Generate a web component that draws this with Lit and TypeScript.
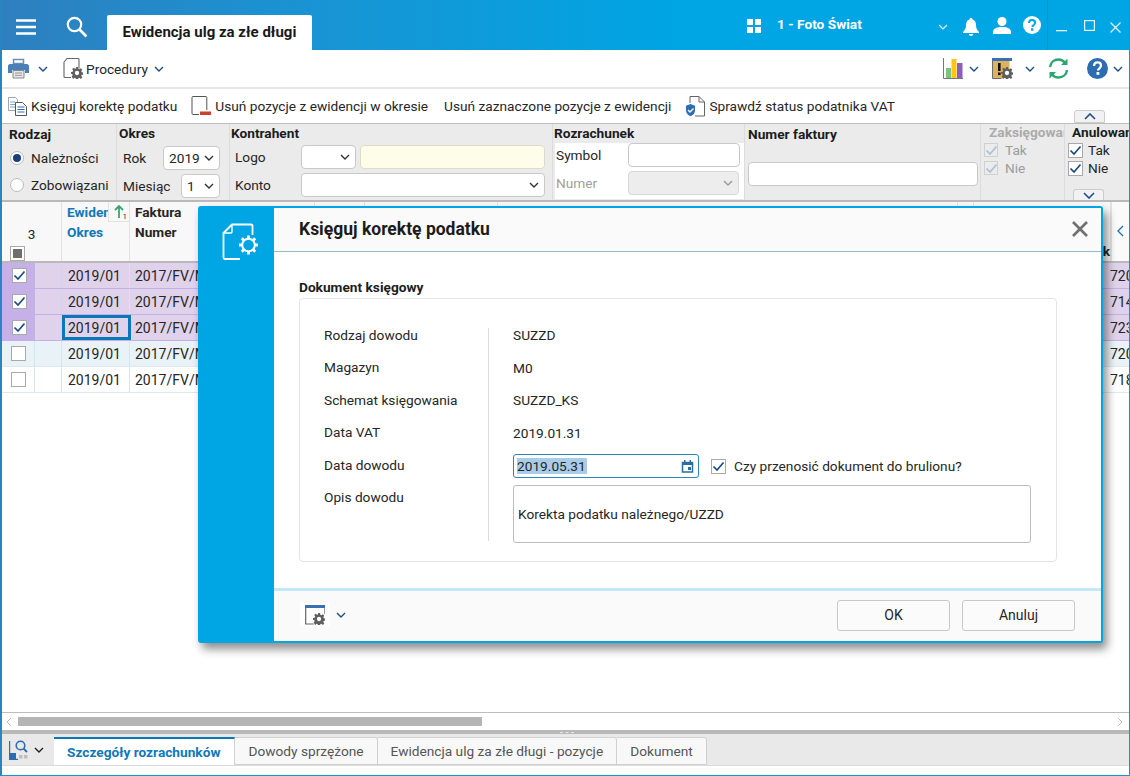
import { LitElement, html, css } from "lit";
import { customElement } from "lit/decorators.js";

const chev = (c = "#1f4e86") => html`<svg class="chev" width="10" height="6" viewBox="0 0 10 6"><path d="M1 1l4 4 4-4" fill="none" stroke=${c} stroke-width="1.4"/></svg>`;

const gear = (cx: number, cy: number, r: number, c = "#5f5f5f") => html`<svg x=${cx - r} y=${cy - r} width=${r * 2} height=${r * 2} viewBox="0 0 20 20"><path d="M8.3 0h3.4l.5 2.9 1.9.8 2.4-1.7 2.4 2.4-1.7 2.4.8 1.9 2.9.5v3.4l-2.9.5-.8 1.9 1.7 2.4-2.4 2.4-2.4-1.7-1.9.8-.5 2.9H8.3l-.5-2.9-1.9-.8-2.4 1.7L1.100 16l1.7-2.400-.8-1.900L0 11.200V8.300l2.900-.5.8-1.900L2 3.500l2.400-2.400L6.800 2.800l1.900-.8z" fill-rule="evenodd" fill=${c}/><circle cx="10" cy="10" r="3.600" fill="#fff"/></svg>`;

@customElement("app-root")
export class AppRoot extends LitElement {
  static styles = css`
    :host { display: block; width: 1130px; height: 776px; font-family: Roboto, "Liberation Sans", sans-serif; font-size: 13.7px; color: #262626; }
    * { box-sizing: border-box; }
    svg { display: block; flex: none; }
    .win { position: relative; width: 1130px; height: 776px; display: flex; flex-direction: column; overflow: hidden; background: #fff; border-left: 2px solid #2a84c2; border-right: 1px solid #0a9ad6; border-bottom: 1px solid #0a9ad6; }
    .title { height: 50px; margin-left: -2px; margin-right: -1px; display: flex; align-items: flex-start; background: linear-gradient(90deg, #2e7fbe 0%, #1b92d2 25%, #00a5e3 60%); color: #fff; flex: none; }
    .ham { margin: 19px 0 0 16px; width: 20px; }
    .srch { margin: 16px 0 0 30px; }
    .tab0 { margin: 15px 0 0 19px; width: 205px; height: 35px; background: #fff; color: #1a1a1a; font-weight: 700; font-size: 15px; line-height: 34px; text-align: center; border-radius: 2px 2px 0 0; }
    .firm { position: absolute; left: 775px; top: 16px; font-weight: 700; line-height: 16px; color: #fff; white-space: nowrap; }
    .overlay { position: absolute; }
    .bar1 { height: 39px; flex: none; display: flex; align-items: center; border-bottom: 2px solid #e6e6e6; padding: 0 0 0 6px; }
    .bar1 .lbl { margin-left: 3px; margin-right: 6px; }
    .spacer { flex: 1; }
    .bar2 { height: 34px; flex: none; display: flex; align-items: center; padding-left: 6px; position: relative; white-space: nowrap; }
    .bar2 .item { display: flex; align-items: center; gap: 3px; }
    .cbtn { position: absolute; width: 31px; height: 13px; left: 1072px; background: #f2f2f2; border: 1px solid #ccc; border-radius: 3px 3px 0 0; display: flex; align-items: center; justify-content: center; }
    .filter { height: 79px; flex: none; display: flex; background: #ebebeb; border-top: 1px solid #bdbdbd; border-bottom: 2px solid #b9b9b9; position: relative; }
    .sec { border-right: 1px solid #dcdcdc; overflow: hidden; flex: none; white-space: nowrap; }
    .h { font-weight: 700; line-height: 18px; height: 18px; color: #1c1c1c; }
    .s1 { width: 115px; padding-left: 7px; }
    .s1 .h { height: 20px; line-height: 20px; }
    .radio { display: flex; align-items: center; height: 27px; gap: 7px; }
    .rb { width: 14px; height: 14px; border-radius: 50%; border: 1px solid #bbb; background: #fff; flex: none; margin-left: 1px; display: flex; align-items: center; justify-content: center; }
    .rb i { width: 8px; height: 8px; border-radius: 50%; background: #17407a; }
    .s2 { width: 113px; padding-left: 2px; }
    .frow { display: flex; align-items: center; height: 24px; margin-top: 4px; }
    .s2 .lab { padding-left: 4px; }
    .sel { height: 24px; background: #fff; border: 1px solid #c9c9c9; border-radius: 4px; display: flex; align-items: center; justify-content: space-between; padding: 0 5px; }
    .s3 { width: 323px; padding-left: 1px; }
    .s3 .lab { width: 70px; padding-left: 4px; }
    .inp { height: 24px; background: #fff; border: 1px solid #c9c9c9; border-radius: 4px; }
    .yellow { background: #fefde9; border-color: #dedcc8; width: 185px; margin-left: 4px; }
    .s4 { width: 192px; padding-left: 1px; }
    .white { margin: 1px 0 0 1px; width: 189px; height: 56px; background: #fff; display: flex; flex-direction: column; }
    .white .r { display: flex; align-items: center; height: 24px; }
    .white .lab { width: 73px; padding-left: 1px; }
    .white .r + .r { margin-top: 4px; }
    .dis { color: #a0a0a0; }
    .s5 { width: 236px; padding-left: 3px; }
    .s5 .h { line-height: 20px; height: 20px; }
    .s5 .inp { margin-top: 18px; width: 230px; }
    .s6 { width: 84px; padding-left: 3px; color: #9c9c9c; }
    .s6 .h { color: #ababab; padding-left: 5px; line-height: 17px; height: 17px; }
    .s7 { flex: 1; border-right: 0; padding-left: 3px; position: relative; }
    .s7 .h { padding-left: 4px; line-height: 17px; height: 17px; }
    .cbrow { display: flex; align-items: center; gap: 5px; height: 18px; }
    .cb { width: 15px; height: 15px; border: 1px solid #a9a9a9; background: #fff; flex: none; display: flex; align-items: center; justify-content: center; }
    .cb.small { width: 14px; height: 14px; }
    .cb.d { border-color: #d0d0d0; background: #ececec; }
    .down { position: absolute; left: 8px; bottom: 0; width: 31px; height: 11px; background: #f2f2f2; border: 1px solid #ccc; border-bottom: 0; border-radius: 3px 3px 0 0; display: flex; align-items: center; justify-content: center; }
    .ghead { height: 61px; flex: none; display: flex; border-bottom: 2px solid #b9b9b9; background: #f8f8f8; position: relative; font-weight: 700; }
    .gc { border-right: 1px solid #e2e2e2; flex: none; position: relative; }
    .g1 { width: 60px; display: flex; flex-direction: column; font-weight: 400; padding-top: 24px; }
    .g1 .n { line-height: 16px; height: 19px; text-align: center; }
    .g1 .cb { margin: 1px 0 0 8px; }
    .g2 { width: 68px; overflow: hidden; }
    .blue { color: #0f78b8; }
    .hl { height: 20px; line-height: 20px; padding-left: 5px; overflow: hidden; white-space: nowrap; }
    .sort { position: absolute; right: 0; top: 0; width: 21px; height: 20px; background: #f8f8f8; border-left: 1px solid #e2e2e2; border-bottom: 1px solid #e2e2e2; display: flex; padding-left: 5px; padding-top: 3px; }
    .sort b { position: absolute; font-size: 8px; font-weight: 400; right: 2px; bottom: 0; line-height: 9px; color: #333; }
    .g3 { width: 185px; }
    .g4 { width: 50px; } .g5 { width: 133px; } .g6 { width: 460px; } .g7 { width: 16px; }
    .g8 { width: 137px; display: flex; align-items: flex-end; justify-content: flex-end; line-height: 19px; }
    .g9 { flex: 1; display: flex; align-items: center; justify-content: center; border-right: 0; border-left: 1px solid #e2e2e2; background: #fafafa; padding-bottom: 2px; }
    .row { height: 26px; flex: none; display: flex; border-bottom: 1px solid #dde9f2; line-height: 26px; font-size: 14px; }
    .row.sel1 { background: #dfd2ea; border-bottom-color: #c6aee8; }
    .row.alt { background: #e9f2f6; }
    .row .a { width: 33px; display: flex; align-items: center; justify-content: center; border-right: 1px solid #d4e6f3; padding-left: 1px; }
    .row.sel1 .a { background: #c6b0e8; border-right: 0; }
    .row .b { width: 27px; border-right: 1px solid #d4e6f3; }
    .row.sel1 .b { border-right-color: #cfd6ee; }
    .row .c { width: 68px; padding-left: 6px; border-right: 1px solid #d4e6f3; position: relative; }
    .row .d { width: 980px; padding-left: 5px; }
    .row .e { flex: 1; overflow: hidden; white-space: nowrap; }
    .row .c.act { outline: 3px solid #0a78b8; outline-offset: -3px; border-right: 0; width: 69px; margin-right: -1px; z-index: 1; }
    .fill { flex: 1; }
    .scroll { height: 18px; flex: none; border-top: 1px solid #bdbdbd; display: flex; align-items: center; padding: 0 6px 0 4px; }
    .thumb { width: 464px; height: 9px; background: #b5b5b5; margin-left: 6px; }
    .split { height: 4px; flex: none; background: #b8b8b8; display: flex; justify-content: center; align-items: center; }
    .split i { width: 14px; height: 0; border-top: 1px dashed #e8e8e8; margin-left: 2px; }
    .tabs { height: 32px; flex: none; background: #e9e9e9; border-bottom: 1px solid #dcdcdc; display: flex; align-items: flex-end; padding-left: 7px; }
    .tabs .ic { align-self: center; margin-right: 10px; display: flex; align-items: center; gap: 5px; }
    .strip { height: 9px; flex: none; background: #fff; }
    .t { height: 28px; line-height: 26px; padding: 0 13px; background: #f8f8f8; border: 1px solid #d0d0d0; border-left: 0; border-radius: 0 3px 0 0; color: #555; font-size: 13.7px; white-space: nowrap; }
    .t.on { background: #fff; border: 0; border-top: 2px solid #0a78b8; color: #0f78b8; font-weight: 700; border-radius: 0; padding: 0 14px 0 13px; border-right: 1px solid #d0d0d0; font-size: 13.7px; }
    .dlg { position: absolute; left: 196px; top: 206px; width: 905px; height: 437px; background: #00a5e3; border: 2px solid #00a5e3; border-radius: 3px; box-shadow: 4px 6px 10px rgba(0, 0, 0, .45); display: flex; }
    .side { width: 74px; flex: none; padding: 15px 0 0 22px; }
    .panel { flex: 1; background: #fff; display: flex; flex-direction: column; border-radius: 2px 0 0 2px; }
    .dh { height: 44px; flex: none; background: #fafafa; border-bottom: 1px solid #9bb9c8; display: flex; align-items: center; justify-content: space-between; padding: 0 13px 2px 25px; font-size: 17.5px; font-weight: 700; color: #1c1c1c; }
    .db { flex: 1; padding: 26px 0 0 25px; }
    .dbt { font-weight: 700; line-height: 18px; color: #1c1c1c; }
    .box { margin-top: 2px; width: 758px; height: 264px; border: 1px solid #e4e4e4; border-radius: 4px; padding: 30px 24px 0; display: flex; }
    .labs { width: 165px; border-right: 1px solid #dcdcdc; height: 213px; flex: none; margin-top: -1px; }
    .labs div, .vals > div { height: 32.5px; line-height: 12px; }
    .vals { padding-left: 24px; flex: 1; }
    .vals > .dt { display: flex; align-items: center; gap: 12px; margin-top: -5px; height: 24px; line-height: 16px; }
    .dinput { width: 186px; height: 24px; border: 1px solid #2c86b6; border-radius: 3px; display: flex; align-items: center; justify-content: space-between; padding: 0 4px 0 3px; }
    .dinput span { background: #a9cde8; line-height: 16px; padding-right: 1px; }
    .dchk { display: flex; align-items: center; gap: 8px; }
    .vals > .ta { width: 518px; height: 58px; margin-top: 7px; border: 1px solid #bdbdbd; border-radius: 3px; padding: 0 4px; line-height: 56px; }
    .df { height: 53px; flex: none; background: #fafafa; border-top: 3px solid #c5e8f6; display: flex; align-items: center; padding: 0 26px 2px 26px; }
    .btn { width: 113px; height: 31px; border: 1px solid #c8c8c8; border-radius: 3px; background: #fbfbfb; display: flex; align-items: center; justify-content: center; font-size: 14px; margin-left: 12px; }
    .fic { width: 30px; height: 24px; background: #fff; display: flex; align-items: center; justify-content: center; margin-right: 6px; }
  `;

  private cb(checked: boolean, cls = "") {
    return html`<span class="cb ${cls}">${checked ? html`<svg width="13" height="11" viewBox="0 0 13 11"><path d="M1.500 5.500l3.500 3.500L11.500 1.500" fill="none" stroke=${cls.includes("d") ? "#a9c0d6" : "#1c4a82"} stroke-width="1.700"/></svg>` : ""}</span>`;
  }

  private row(v: string, cls: string, checked: boolean, act = false) {
    return html`<div class="row ${cls}">
      <div class="a">${this.cb(checked)}</div><div class="b"></div>
      <div class="c ${act ? "act" : ""}">2019/01</div>
      <div class="d">2017/FV/M</div><div class="e">${v}</div>
    </div>`;
  }

  render() {
    return html`<div class="win">
      <div class="title">
        <svg class="ham" width="20" height="16" viewBox="0 0 20 16"><path d="M0 1.500h20M0 8h20M0 14.500h20" stroke="#fff" stroke-width="2.300"/></svg>
        <svg class="srch" width="22" height="22" viewBox="0 0 22 22"><circle cx="8.500" cy="8.500" r="6.700" fill="none" stroke="#fff" stroke-width="2.200"/><path d="M13.500 13.500l7 7" stroke="#fff" stroke-width="2.600"/></svg>
        <div class="tab0">Ewidencja ulg za złe długi</div>
      </div>
      <svg class="overlay" style="left:745px;top:19px" width="14" height="14" viewBox="0 0 14 14"><path d="M0 0h6v6H0zM8 0h6v6H8zM0 8h6v6H0zM8 8h6v6H8z" fill="#fff"/></svg>
      <div class="firm">1 - Foto Świat</div>
      <svg class="overlay" style="left:936px;top:24px" width="10" height="6" viewBox="0 0 10 6"><path d="M1 1l4 4 4-4" fill="none" stroke="#e6f5fc" stroke-width="1.200"/></svg>
      <svg class="overlay" style="left:961px;top:18px" width="16" height="18" viewBox="0 0 16 18"><path d="M8 0c1 0 1.500.7 1.500 1.500 2.500.7 3.500 3 3.500 5.500 0 3.500 1 5 3 7v1H0v-1c2-2 3-3.500 3-7 0-2.500 1-4.800 3.500-5.500C6.500.7 7 0 8 0zM5.800 16h4.400c0 1-1 2-2.200 2s-2.200-1-2.200-2z" fill="#fff"/></svg>
      <svg class="overlay" style="left:991px;top:17px" width="18" height="17" viewBox="0 0 18 17"><circle cx="9" cy="4.500" r="4.500" fill="#fff"/><path d="M0 17v-2c0-3 3-5 9-5s9 2 9 5v2z" fill="#fff"/></svg>
      <svg class="overlay" style="left:1021px;top:16px" width="18" height="18" viewBox="0 0 18 18"><circle cx="9" cy="9" r="9" fill="#fff"/><path d="M6 7c0-2 1.300-3 3.100-3s3 1 3 2.700c0 2.300-2.700 2.200-2.700 4.300" fill="none" stroke="#00a5e3" stroke-width="2"/><rect x="8" y="12.300" width="2.400" height="2.400" fill="#00a5e3"/></svg>
      <div class="overlay" style="left:1045px;top:0;width:1px;height:50px;background:#0f93cc"></div>
      <svg class="overlay" style="left:1054px;top:30px" width="11" height="2"><rect width="11" height="1.300" fill="#e8f7fd"/></svg>
      <svg class="overlay" style="left:1082px;top:20px" width="11" height="11" viewBox="0 0 11 11"><rect x=".6" y=".6" width="9.800" height="9.800" fill="none" stroke="#e8f7fd" stroke-width="1.200"/></svg>
      <svg class="overlay" style="left:1108px;top:22px" width="11" height="11" viewBox="0 0 11 11"><path d="M.5.5l10 10M10.500.5l-10 10" stroke="#e8f7fd" stroke-width="1.200"/></svg>

      <div class="bar1">
        <svg width="21" height="21" viewBox="0 0 21 21"><path d="M5.500 1.500h10v4h-10z" fill="#fff" stroke="#6b8db5" stroke-width="1.500"/><path d="M2 6h17c1 0 2 1 2 2v7h-4v-3H4v3H0V8c0-1 1-2 2-2z" fill="#4a7fb8"/><path d="M5 12.500h11v7.500H5z" fill="#e6e6e6" stroke="#8a8a8a"/><path d="M7 15h7M7 17.300h7" stroke="#9a9a9a"/></svg>
        <span style="margin-left:9px;display:flex">${chev()}</span>
        <svg style="margin-left:15px" width="20" height="21" viewBox="0 0 20 21"><path d="M1 4L4 .5h11c.8 0 1 .4 1 1v9M8 19.500H2c-.8 0-1-.4-1-1V4" fill="none" stroke="#666" stroke-width="1.100"/>${gear(14, 15, 6)}</svg>
        <span class="lbl">Procedury</span>${chev()}
        <span class="spacer"></span>
        <svg width="20" height="21" viewBox="0 0 20 21"><path d="M.5 0v20.500H20" fill="none" stroke="#777"/><rect x="3" y="10" width="5" height="10" fill="#7dc27f"/><rect x="8.500" y="1" width="5" height="19" fill="#fec514"/><rect x="14" y="5" width="5.500" height="15" fill="#8c5fbe"/></svg>
        <span style="margin-left:6px;display:flex">${chev()}</span>
        <svg style="margin-left:13px" width="21" height="21" viewBox="0 0 21 21"><rect width="20" height="3" fill="#3a6fb0"/><rect x=".5" y="3" width="17" height="17" fill="#dcb25f"/><path d="M.5 3v17.500h9" fill="none" stroke="#6b6b6b"/><rect x="6" y="5" width="2.600" height="8" fill="#111"/><rect x="6" y="14.500" width="2.600" height="2.600" fill="#111"/>${gear(15, 15, 6)}</svg>
        <span style="margin-left:12px;display:flex">${chev()}</span>
        <svg style="margin-left:13px" width="21" height="21" viewBox="0 0 21 21"><path d="M2 9C2.500 4.500 6 1.500 10.500 1.500c2.800 0 5 1.200 6.500 3.300M19 12c-.5 4.500-4 7.500-8.500 7.500-2.800 0-5-1.200-6.500-3.300" fill="none" stroke="#2aa66f" stroke-width="2.400"/><path d="M19.500.5v6.500h-6.500zM1.500 20.500V14h6.500z" fill="#2aa66f"/></svg>
        <svg style="margin-left:18px" width="21" height="21" viewBox="0 0 21 21"><circle cx="10.500" cy="10.500" r="10.500" fill="#2c6cb0"/><path d="M7 8c0-2.300 1.500-3.600 3.600-3.600S14 5.600 14 7.600c0 2.700-3 2.600-3 5" fill="none" stroke="#fff" stroke-width="2.300"/><rect x="9.500" y="14" width="2.800" height="2.800" fill="#fff"/></svg>
        <span style="margin-left:5px;margin-right:6px;display:flex">${chev()}</span>
      </div>

      <div class="bar2">
        <span class="item"><svg width="20" height="20" viewBox="0 0 20 20"><path d="M.5 1.500h7l2 2v11h-9z" fill="#fff" stroke="#9aa7b4"/><path d="M2 6h5M2 8.500h5M2 11h5" stroke="#7aa6d0"/><path d="M7.500 6.500h7l4 4v9h-11z" fill="#fff" stroke="#555"/><path d="M9.500 11h7M9.500 13.500h7M9.500 16h7" stroke="#2c6cb0"/></svg>Księguj korektę podatku</span>
        <span class="item" style="margin-left:14px"><svg width="21" height="20" viewBox="0 0 21 20"><path d="M12 .5H2c-.8 0-1 .4-1 1v16c0 .6.4 1 1 1h6" fill="none" stroke="#555"/><path d="M12 .5h3c.5 0 .8.4.8 1V14" fill="none" stroke="#555"/><rect x="9" y="15.500" width="11" height="3.500" fill="#c9432e"/></svg>Usuń pozycje z ewidencji w okresie</span>
        <span class="item" style="margin-left:16px">Usuń zaznaczone pozycje z ewidencji</span>
        <span class="item" style="margin-left:14px"><svg width="21" height="21" viewBox="0 0 21 21"><path d="M5 7V.5h9l5.500 5.500v14H10" fill="none" stroke="#666"/><path d="M14 .5V6h5.500" fill="none" stroke="#666"/><path d="M5.500 8L10 9.800v4.500c0 3-2 5-4.500 6C3 19.300 1 17.300 1 14.300V9.800z" fill="#2c6cb0"/><path d="M3 14l2 2 3.500-3.500" fill="none" stroke="#fff" stroke-width="1.300"/></svg>Sprawdź status podatnika VAT</span>
        <span class="cbtn" style="top:21px"><svg width="12" height="7" viewBox="0 0 12 7"><path d="M1 6l5-5 5 5" fill="none" stroke="#1f4e86" stroke-width="1.600"/></svg></span>
      </div>

      <div class="filter">
        <div class="sec s1">
          <div class="h">Rodzaj</div>
          <div class="radio"><span class="rb"><i></i></span>Należności</div>
          <div class="radio"><span class="rb"></span>Zobowiązani</div>
        </div>
        <div class="sec s2">
          <div class="h">Okres</div>
          <div class="frow"><span class="lab" style="width:44px">Rok</span><span class="sel" style="width:57px">2019 ${chev("#333")}</span></div>
          <div class="frow"><span class="lab" style="width:62px">Miesiąc</span><span class="sel" style="width:39px">1 ${chev("#333")}</span></div>
        </div>
        <div class="sec s3">
          <div class="h">Kontrahent</div>
          <div class="frow" style="margin-top:3px"><span class="lab">Logo</span><span class="sel" style="width:55px;justify-content:flex-end">${chev("#333")}</span><span class="inp yellow"></span></div>
          <div class="frow"><span class="lab">Konto</span><span class="sel" style="width:244px;justify-content:flex-end">${chev("#333")}</span></div>
        </div>
        <div class="sec s4">
          <div class="h">Rozrachunek</div>
          <div class="white">
            <div class="r"><span class="lab">Symbol</span><span class="inp" style="width:112px"></span></div>
            <div class="r dis"><span class="lab">Numer</span><span class="sel" style="width:111px;background:#ededed;justify-content:flex-end;border-color:#d8d8d8">${chev("#999")}</span></div>
          </div>
        </div>
        <div class="sec s5"><div class="h">Numer faktury</div><div class="inp"></div></div>
        <div class="sec s6">
          <div class="h">Zaksięgowane</div>
          <div class="cbrow">${this.cb(true, "small d")}<span style="margin-left:2px">Tak</span></div>
          <div class="cbrow">${this.cb(true, "small d")}<span style="margin-left:2px">Nie</span></div>
        </div>
        <div class="sec s7">
          <div class="h">Anulowane</div>
          <div class="cbrow">${this.cb(true)}Tak</div>
          <div class="cbrow">${this.cb(true)}Nie</div>
          <span class="down"><svg width="12" height="7" viewBox="0 0 12 7"><path d="M1 1l5 5 5-5" fill="none" stroke="#1f4e86" stroke-width="1.600"/></svg></span>
        </div>
      </div>

      <div class="ghead">
        <div class="gc g1"><span class="n">3</span><span class="cb"><svg width="9" height="9"><rect width="9" height="9" fill="#6e6e6e"/></svg></span></div>
        <div class="gc g2">
          <div class="hl blue">Ewidencja</div><div class="hl blue">Okres</div>
          <span class="sort"><svg width="10" height="13" viewBox="0 0 10 13"><path d="M5 1v12M1 5l4-4 4 4" fill="none" stroke="#3aa56f" stroke-width="1.800"/></svg><b>1</b></span>
        </div>
        <div class="gc g3"><div class="hl">Faktura</div><div class="hl">Numer</div></div>
        <div class="gc g4"></div><div class="gc g5"></div><div class="gc g6"></div><div class="gc g7"></div>
        <div class="gc g8">k</div>
        <div class="gc g9"><svg width="7" height="12" viewBox="0 0 7 12"><path d="M6 1L1 6l5 5" fill="none" stroke="#1f6fb0" stroke-width="1.300"/></svg></div>
      </div>

      ${this.row("720", "sel1", true)}
      ${this.row("714", "sel1", true)}
      ${this.row("723", "sel1", true, true)}
      ${this.row("720", "alt", false)}
      ${this.row("718", "", false)}

      <div class="fill"></div>

      <div class="scroll">
        <svg width="6" height="10" viewBox="0 0 6 10"><path d="M5 1L1 5l4 4" fill="none" stroke="#bbb"/></svg>
        <span class="thumb"></span><span class="spacer"></span>
        <svg width="6" height="10" viewBox="0 0 6 10"><path d="M1 1l4 4-4 4" fill="none" stroke="#bbb"/></svg>
      </div>
      <div class="split"><i></i></div>
      <div class="tabs">
        <span class="ic"><svg width="20" height="20" viewBox="0 0 20 20"><path d="M.5 1v18.500H9" fill="none" stroke="#2c6cb0" stroke-width="1.400"/><rect x="1" y="13" width="6" height="6" fill="#2c6cb0"/><circle cx="11.500" cy="5.500" r="4.300" fill="none" stroke="#2c6cb0" stroke-width="1.600"/><path d="M14.500 8.500L18 12" stroke="#2c6cb0" stroke-width="1.800"/><path d="M10 15h3.500v3.500H10zM15 15h3.500v3.500H15z" fill="#bdbdbd"/></svg>${chev("#222")}</span>
        <span class="t on">Szczegóły rozrachunków</span>
        <span class="t">Dowody sprzężone</span>
        <span class="t">Ewidencja ulg za złe długi - pozycje</span>
        <span class="t">Dokument</span>
      </div>
      <div class="strip"></div>

      <div class="dlg">
        <div class="side">
          <svg width="37" height="39" viewBox="0 0 37 39"><path d="M30.500 12V3c0-1-.5-1.500-1.500-1.500H10L1.500 10v24.500c0 1 .5 1.500 1.500 1.500h15" fill="none" stroke="#fff" stroke-width="1.800" stroke-linejoin="round"/><path d="M10 1.500V9c0 .8-.3 1-1 1H1.500" fill="none" stroke="#fff" stroke-width="1.400"/><circle cx="26.500" cy="22" r="6.300" fill="#00a5e3" stroke="#fff" stroke-width="2"/><path d="M26.500 12.500V16M26.500 28v3.500M17 22h3.500M32.500 22H36M19.800 15.300l2.500 2.500M30.700 26.200l2.500 2.500M33.200 15.300l-2.500 2.500M22.300 26.200l-2.500 2.500" fill="none" stroke="#fff" stroke-width="2.800"/></svg>
        </div>
        <div class="panel">
          <div class="dh"><span>Księguj korektę podatku</span><svg width="16" height="16" viewBox="0 0 16 16"><path d="M1 1l14 14M15 1L1 15" stroke="#707070" stroke-width="2.700"/></svg></div>
          <div class="db">
            <div class="dbt">Dokument księgowy</div>
            <div class="box">
              <div class="labs"><div style="padding-top:1px">Rodzaj dowodu</div><div>Magazyn</div><div style="padding-top:1px">Schemat księgowania</div><div>Data VAT</div><div style="padding-top:1px">Data dowodu</div><div>Opis dowodu</div></div>
              <div class="vals">
                <div>SUZZD</div><div>M0</div><div>SUZZD_KS</div><div>2019.01.31</div>
                <div class="dt">
                  <span class="dinput"><span>2019.05.31</span><svg width="13" height="13" viewBox="0 0 13 13"><path d="M1.500 2.500h10v9.500h-10z" fill="none" stroke="#2c6f9c" stroke-width="1.500"/><rect x="1" y="2" width="11" height="3" fill="#2c6f9c"/><rect x="3" y="0" width="1.500" height="3" fill="#2c6f9c"/><rect x="8.500" y="0" width="1.500" height="3" fill="#2c6f9c"/><rect x="7" y="7" width="3" height="3" fill="#2c6f9c"/></svg></span>
                  <span class="dchk">${this.cb(true)}Czy przenosić dokument do brulionu?</span>
                </div>
                <div class="ta">Korekta podatku należnego/UZZD</div>
              </div>
            </div>
          </div>
          <div class="df">
            <span class="fic"><svg width="20" height="20" viewBox="0 0 20 20"><rect width="20" height="3" fill="#3a6fb0"/><path d="M.7 3v16h8" fill="none" stroke="#666" stroke-width="1.200"/><path d="M19.500 3v6" fill="none" stroke="#999"/>${gear(14, 14, 6)}</svg></span>
            ${chev()}
            <span class="spacer"></span>
            <span class="btn">OK</span><span class="btn">Anuluj</span>
          </div>
        </div>
      </div>
    </div>`;
  }
}
